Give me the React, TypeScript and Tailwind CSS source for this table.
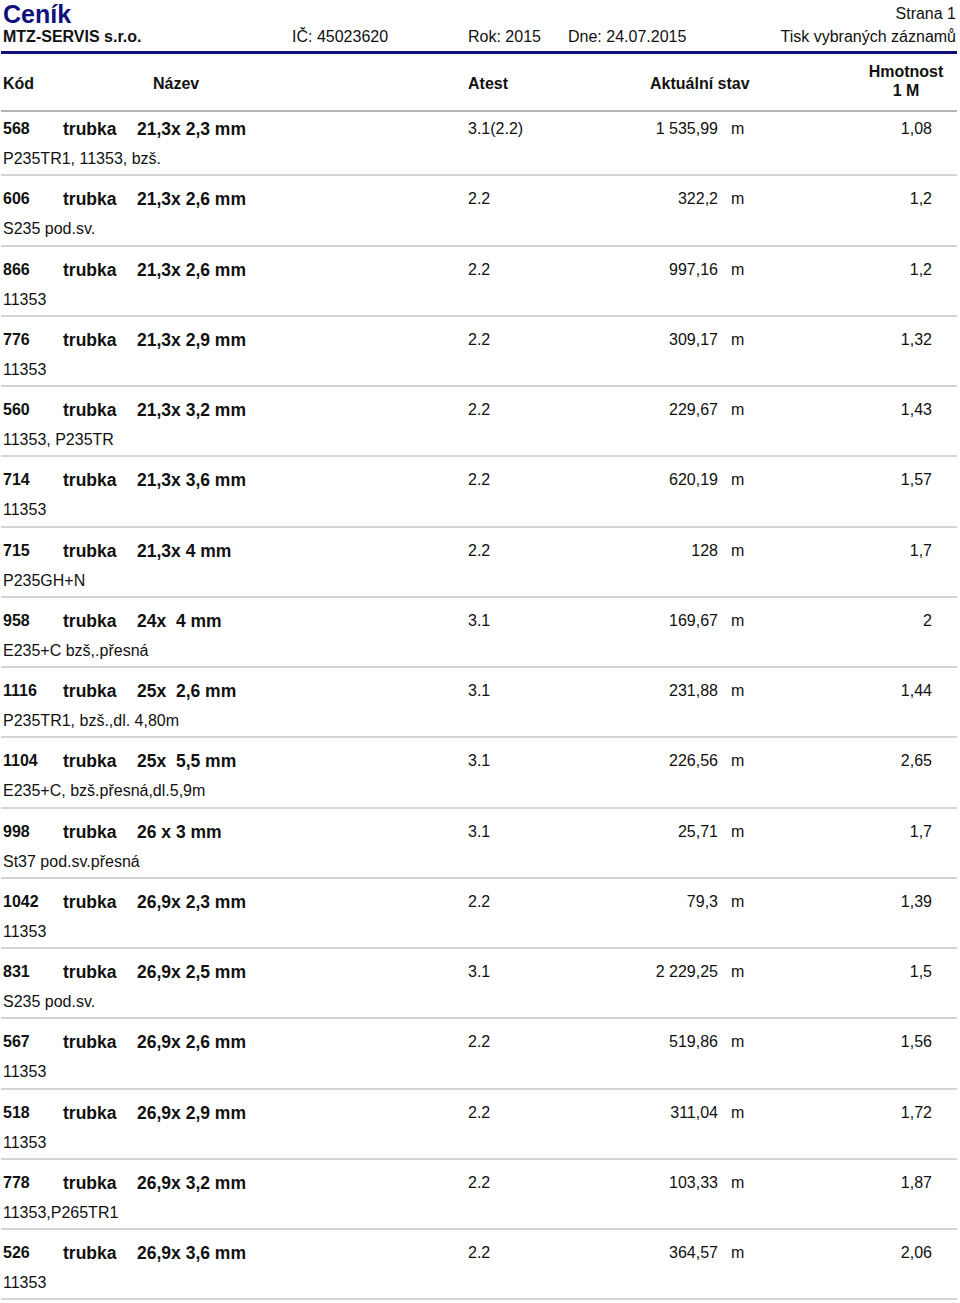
const rows = [
  { kod: "568", rozmer: "21,3x 2,3 mm", atest: "3.1(2.2)", stav: "1 535,99", hm: "1,08", pozn: "P235TR1, 11353, bzš." },
  { kod: "606", rozmer: "21,3x 2,6 mm", atest: "2.2", stav: "322,2", hm: "1,2", pozn: "S235 pod.sv." },
  { kod: "866", rozmer: "21,3x 2,6 mm", atest: "2.2", stav: "997,16", hm: "1,2", pozn: "11353" },
  { kod: "776", rozmer: "21,3x 2,9 mm", atest: "2.2", stav: "309,17", hm: "1,32", pozn: "11353" },
  { kod: "560", rozmer: "21,3x 3,2 mm", atest: "2.2", stav: "229,67", hm: "1,43", pozn: "11353, P235TR" },
  { kod: "714", rozmer: "21,3x 3,6 mm", atest: "2.2", stav: "620,19", hm: "1,57", pozn: "11353" },
  { kod: "715", rozmer: "21,3x 4 mm", atest: "2.2", stav: "128", hm: "1,7", pozn: "P235GH+N" },
  { kod: "958", rozmer: "24x  4 mm", atest: "3.1", stav: "169,67", hm: "2", pozn: "E235+C bzš,.přesná" },
  { kod: "1116", rozmer: "25x  2,6 mm", atest: "3.1", stav: "231,88", hm: "1,44", pozn: "P235TR1, bzš.,dl. 4,80m" },
  { kod: "1104", rozmer: "25x  5,5 mm", atest: "3.1", stav: "226,56", hm: "2,65", pozn: "E235+C, bzš.přesná,dl.5,9m" },
  { kod: "998", rozmer: "26 x 3 mm", atest: "3.1", stav: "25,71", hm: "1,7", pozn: "St37 pod.sv.přesná" },
  { kod: "1042", rozmer: "26,9x 2,3 mm", atest: "2.2", stav: "79,3", hm: "1,39", pozn: "11353" },
  { kod: "831", rozmer: "26,9x 2,5 mm", atest: "3.1", stav: "2 229,25", hm: "1,5", pozn: "S235 pod.sv." },
  { kod: "567", rozmer: "26,9x 2,6 mm", atest: "2.2", stav: "519,86", hm: "1,56", pozn: "11353" },
  { kod: "518", rozmer: "26,9x 2,9 mm", atest: "2.2", stav: "311,04", hm: "1,72", pozn: "11353" },
  { kod: "778", rozmer: "26,9x 3,2 mm", atest: "2.2", stav: "103,33", hm: "1,87", pozn: "11353,P265TR1" },
  { kod: "526", rozmer: "26,9x 3,6 mm", atest: "2.2", stav: "364,57", hm: "2,06", pozn: "11353" },
];

function Row({ r, first }: { r: (typeof rows)[number]; first: boolean }) {
  return (
    <div className={first ? "pt-[7px]" : "pt-[13px]"}>
      <div className="flex h-[20px] items-center pl-[3px] leading-[20px]">
        <div className="w-[60px] text-[16px] font-bold">{r.kod}</div>
        <div className="w-[74px] text-[17.5px] font-bold">trubka</div>
        <div className="w-[331px] whitespace-pre text-[17.5px] font-bold">{r.rozmer}</div>
        <div className="w-[150px] text-[16px]">{r.atest}</div>
        <div className="w-[100px] text-right text-[16px]">{r.stav}</div>
        <div className="ml-[13px] w-[40px] text-[16px]">m</div>
        <div className="w-[161px] text-right text-[16px]">{r.hm}</div>
      </div>
      <div className="mt-[10px] h-[20px] pl-[3px] text-[16px] leading-[20px]">{r.pozn}</div>
      <div className="mt-[5.25px] ml-[1px] mr-[3px] h-[2px] bg-[#d4d4d4]" />
    </div>
  );
}

export default function App() {
  return (
    <div className="h-[1303px] w-[960px] overflow-hidden bg-white font-['Liberation_Sans',Arial,sans-serif] text-[#111]">
      <div className="flex h-[27px] items-end pl-[3px] pr-[4px]">
        <div className="text-[25px] font-bold leading-[26px] text-[#10107c]">Ceník</div>
        <div className="mb-[3px] ml-auto text-[16px] leading-[20px]">Strana 1</div>
      </div>
      <div className="flex h-[20px] items-center pl-[3px] pr-[4px] text-[16px] leading-[20px]">
        <div className="w-[289px] font-bold">MTZ-SERVIS s.r.o.</div>
        <div className="w-[176px]">IČ: 45023620</div>
        <div className="w-[100px]">Rok: 2015</div>
        <div>Dne: 24.07.2015</div>
        <div className="ml-auto">Tisk vybraných záznamů</div>
      </div>
      <div className="mt-[4px] ml-[1px] mr-[3px] h-[3px] bg-[#10107c]" />
      <div className="flex h-[56px] items-start pl-[3px] text-[16px] font-bold leading-[20px]">
        <div className="w-[150px] pt-[20px]">Kód</div>
        <div className="w-[315px] pt-[20px]">Název</div>
        <div className="w-[182px] pt-[20px]">Atest</div>
        <div className="w-[206px] pt-[20px]">Aktuální stav</div>
        <div className="w-[100px] pt-[7.5px] text-center leading-[19px]">
          <div>Hmotnost</div>
          <div>1 M</div>
        </div>
      </div>
      <div className="ml-[1px] mr-[3px] h-[2px] bg-[#b4b4b4]" />
      {rows.map((r, i) => (
        <Row key={r.kod + i} r={r} first={i === 0} />
      ))}
    </div>
  );
}
